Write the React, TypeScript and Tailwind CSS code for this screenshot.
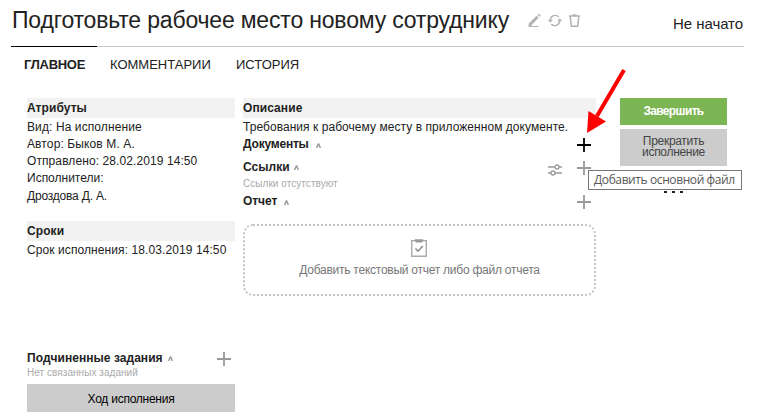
import type { ReactNode } from 'react';

function Plus({ className = '' }: { className?: string }) {
  return (
    <svg className={`block h-[14px] w-[14px] shrink-0 ${className}`} viewBox="0 0 14 14" fill="none" stroke="currentColor" strokeWidth="1.8">
      <path d="M7 0v14M0 7h14" />
    </svg>
  );
}

function Caret() {
  return (
    <svg className="block h-[5px] w-[5px] text-[#999]" viewBox="0 0 5 5" fill="none" stroke="currentColor" strokeWidth="1.4">
      <path d="M.6 5L2.5.6L4.4 5" strokeLinejoin="bevel" />
    </svg>
  );
}

function Heading({ children }: { children: ReactNode }) {
  return <h2 className="h-5 whitespace-nowrap bg-[#f2f2f2] text-[12px] font-bold leading-[21px] tracking-[0.08px]">{children}</h2>;
}

function Header() {
  return (
    <header className="flex h-[46px] justify-between pl-px">
      <div className="flex">
        <h1 className="w-[516px] whitespace-nowrap pt-[6px] text-[23px] leading-[28px] tracking-[-0.18px]">
          Подготовьте рабочее место новому сотруднику
        </h1>
        <div className="flex gap-[7px] pt-[14px] text-[#b3b3b3]">
          <svg className="h-[13px] w-[13px]" viewBox="0 0 13 13" fill="none" stroke="currentColor">
            <path d="M2.6 9.9L9.6 2.8" strokeWidth="3" />
            <path d="M10.5 1.8L11.7.6" strokeWidth="3" />
            <path d="M1.2 8.2L.2 12.8L4.5 11Z" fill="currentColor" stroke="none" />
            <path d="M1 12.5h9.5" strokeWidth="1" />
          </svg>
          <svg className="h-[13px] w-[14px]" viewBox="0 0 14 13" fill="none" stroke="currentColor" strokeWidth="1.4">
            <path d="M2.3 6A4.9 4.9 0 0 1 10.8 3M11.7 7A4.9 4.9 0 0 1 3.2 10" />
            <path d="M-.2 5.8h5L2.3 8.8ZM9.2 7.2h5L11.7 4.2Z" fill="currentColor" stroke="none" />
          </svg>
          <svg className="h-[13px] w-[11px]" viewBox="0 0 11 13" fill="none" stroke="currentColor" strokeWidth="1.5">
            <path d="M0 2h11M3.5 .9h4M1.2 2L2.3 12.2H8.7L9.8 2" />
          </svg>
        </div>
      </div>
      <div className="w-[71px] whitespace-nowrap pt-[14px] text-[15px] leading-5 tracking-[-0.05px]">Не начато</div>
    </header>
  );
}

function Tabs() {
  return (
    <nav className="flex h-[52px] border-t border-[#c8c8c8] text-[13px] leading-[15px]">
      <div className="-mt-px w-[86px] border-t border-black pl-[13px] pt-[10px] font-bold tracking-[-0.3px]">ГЛАВНОЕ</div>
      <div className="w-[126px] pl-[13px] pt-[10px]">КОММЕНТАРИИ</div>
      <div className="pl-[13px] pt-[10px]">ИСТОРИЯ</div>
    </nav>
  );
}

function Attributes() {
  return (
    <section className="h-[123px]">
      <Heading>Атрибуты</Heading>
      <div className="whitespace-nowrap pt-px text-[12px] leading-[17px]">
        <p className="tracking-[0.1px]">Вид: На исполнение</p>
        <p className="tracking-[0.12px]">Автор: Быков М. А.</p>
        <p className="tracking-[0.09px]">Отправлено: 28.02.2019 14:50</p>
        <p>Исполнители:</p>
        <p className="pt-px tracking-[-0.2px]">Дроздова Д. А.</p>
      </div>
    </section>
  );
}

function LeftColumn() {
  return (
    <aside className="w-[208px]">
      <Attributes />
      <section className="h-[130px]">
        <Heading>Сроки</Heading>
        <p className="whitespace-nowrap pt-px text-[12px] leading-[17px] tracking-[0.09px]">Срок исполнения: 18.03.2019 14:50</p>
      </section>
      <section>
        <div className="flex h-[15px] items-center whitespace-nowrap text-[12px] font-bold leading-[15px]">
          <span className="w-[141px] tracking-[0.04px]">Подчиненные задания</span>
          <Caret />
          <Plus className="ml-auto mr-[4px] text-[#999]" />
        </div>
        <p className="whitespace-nowrap text-[10px] leading-[14px] tracking-[0.05px] text-[#aaa]">Нет связанных заданий</p>
        <button className="mt-[4px] block h-7 w-full bg-[#ccc] pt-px text-[12px] tracking-[-0.25px] text-black">Ход исполнения</button>
      </section>
    </aside>
  );
}

function ReportDropZone() {
  return (
    <div className="mt-[15px] flex h-[72px] flex-col items-center rounded-[10px] border-2 border-dotted border-[#c4c4c4] pt-[13px] text-[#777]">
      <svg className="-ml-[2px] block h-[18px] w-4 text-[#aaa]" viewBox="0 0 16 18" fill="none" stroke="currentColor" strokeWidth="1.4">
        <path d="M.7 1.6h14.6v15.7H.7Z" />
        <path d="M3.2 1.2L4.3.2h7.4l1.1 1L11 3.5H5Z" fill="#999" stroke="none" />
        <path d="M4.5 9.5L7 12.2L11.7 7" stroke="#888" strokeWidth="1.5" />
      </svg>
      <span className="mt-[4px] whitespace-nowrap text-[12px] leading-[18px] tracking-[-0.25px]">Добавить текстовый отчет либо файл отчета</span>
    </div>
  );
}

function Description() {
  return (
    <main className="ml-2 w-[353px]">
      <Heading>Описание</Heading>
      <p className="h-[17px] whitespace-nowrap text-[12px] leading-[19px] tracking-[0.05px]">Требования к рабочему месту в приложенном документе.</p>
      <div className="flex h-[23px] text-[12px] font-bold leading-[19px]">
        <span className="w-[73px] tracking-[-0.2px]">Документы</span>
        <div className="pt-[8px]"><Caret /></div>
        <Plus className="ml-auto mr-[5px] mt-[3px] text-black" />
      </div>
      <div className="flex h-[19px] text-[12px] font-bold leading-[19px]">
        <span className="w-[51px] tracking-[0.05px]">Ссылки</span>
        <div className="pt-[7px]"><Caret /></div>
        <svg className="ml-auto mt-[6px] h-3 w-[14px] text-[#999]" viewBox="0 0 14 12" fill="none" stroke="currentColor" strokeWidth="1.3">
          <path d="M0 3h7M11 3h3M0 9h3M7 9h7" />
          <circle cx="9" cy="3" r="2" />
          <circle cx="5" cy="9" r="2" />
        </svg>
        <Plus className="ml-[15px] mr-[5px] mt-[3px] text-[#999]" />
      </div>
      <p className="h-[15px] whitespace-nowrap text-[10px] leading-[14px] tracking-[0.05px] text-[#aaa]">Ссылки отсутствуют</p>
      <div className="flex h-[17px] text-[12px] font-bold leading-[19px]">
        <span className="w-[41px] tracking-[-0.05px]">Отчет</span>
        <div className="pt-[8px]"><Caret /></div>
        <Plus className="ml-auto mr-[5px] mt-[3px] text-[#999]" />
      </div>
      <ReportDropZone />
    </main>
  );
}

function Actions() {
  return (
    <aside className="ml-6 w-[107px]">
      <button className="block h-[27px] w-full bg-[#7cb553] pb-px text-[12px] font-bold tracking-[-0.65px] text-white">Завершить</button>
      <button className="mt-1 flex h-[37px] w-full flex-col items-center bg-[#ccc] pt-[7px] text-[12px] leading-[11px] tracking-[-0.3px] text-[#444]">
        <span>Прекратить</span>
        <span>исполнение</span>
      </button>
      <div className="mt-[25px] flex justify-center gap-[5px]">
        <i className="h-[2px] w-[3px] bg-[#222]" />
        <i className="h-[2px] w-[3px] bg-[#222]" />
        <i className="h-[2px] w-[3px] bg-[#222]" />
      </div>
    </aside>
  );
}

export default function App() {
  return (
    <div className="relative h-[420px] w-[771px] overflow-hidden bg-white pl-[11px] pr-[27px] font-['Liberation_Sans',Arial,sans-serif] text-[#222]">
      <Header />
      <Tabs />
      <div className="flex pl-4">
        <LeftColumn />
        <Description />
        <Actions />
      </div>
      <svg className="absolute left-[580px] top-[64px] h-[72px] w-[50px]" viewBox="0 0 50 72">
        <path d="M44 6L17 52" stroke="#f00" strokeWidth="4" />
        <path d="M7 69L8.5 47L26 57.5Z" fill="#f00" />
      </svg>
      <div className="absolute left-[588px] top-[170px] h-5 w-[154px] whitespace-nowrap border border-[#767676] bg-white pl-[5px] font-['Open_Sans','Noto_Sans',sans-serif] text-[12px] leading-[18px] tracking-[-0.4px] text-[#575757]">
        Добавить основной файл
      </div>
    </div>
  );
}
